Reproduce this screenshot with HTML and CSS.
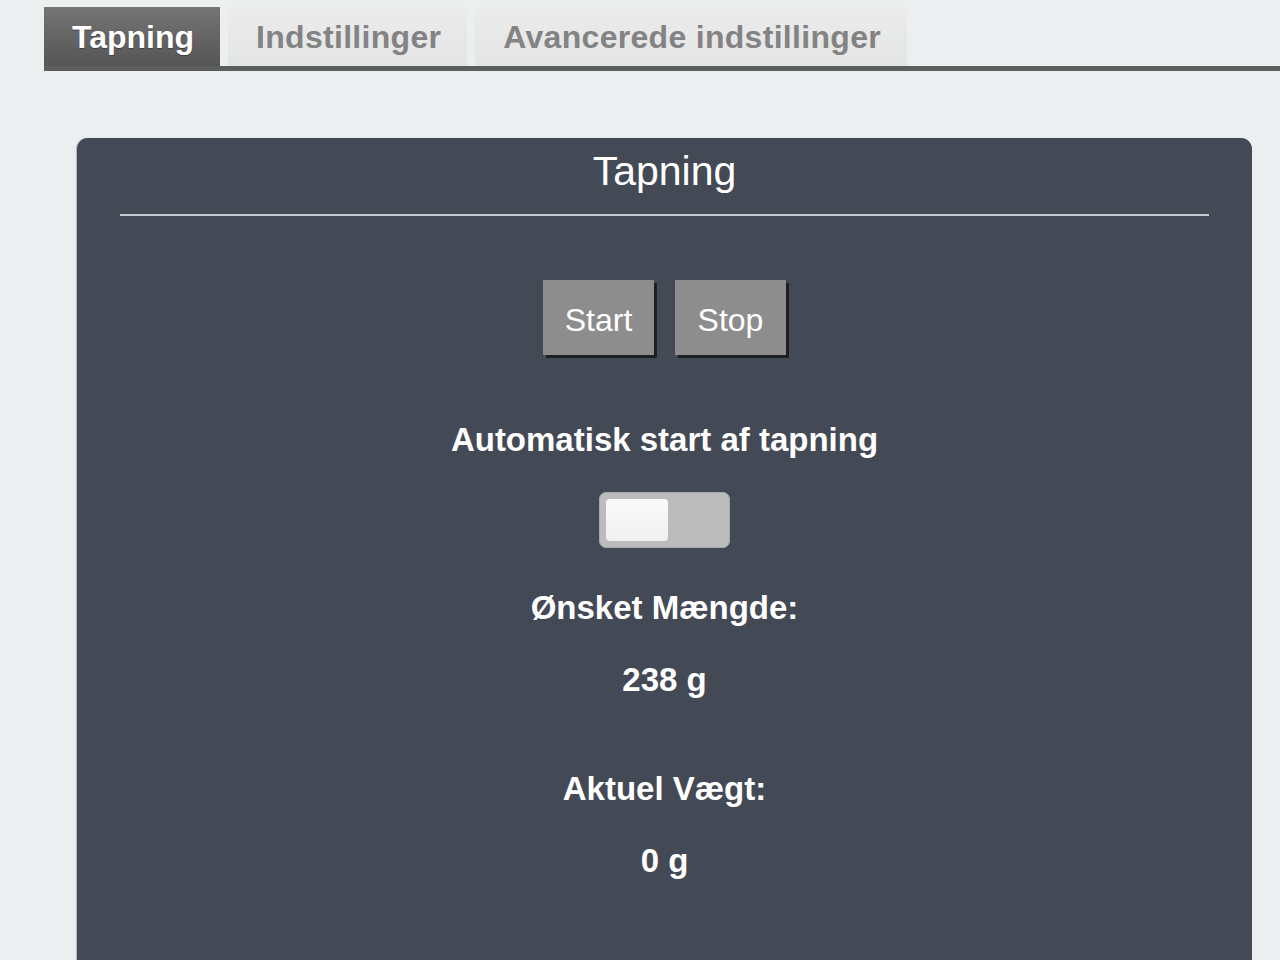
FILE: index.html
```html
<!DOCTYPE html>
<html lang="da">
<head>
<meta charset="utf-8">
<title>Tapning</title>
<link rel="stylesheet" href="styles.css">
</head>
<body>
<nav class="tabs">
  <div class="tab active">Tapning</div>
  <div class="tab">Indstillinger</div>
  <div class="tab">Avancerede indstillinger</div>
</nav>
<main class="panel">
  <h1 class="title">Tapning</h1>
  <div class="rule"></div>
  <div class="buttons">
    <button class="btn">Start</button>
    <button class="btn">Stop</button>
  </div>
  <div class="label auto">Automatisk start af tapning</div>
  <div class="toggle"><div class="knob"></div></div>
  <div class="label wish">Ønsket Mængde:</div>
  <div class="label wish-val">238 g</div>
  <div class="label weight">Aktuel Vægt:</div>
  <div class="label weight-val">0 g</div>
</main>
</body>
</html>
```
FILE: styles.css
```css
html, body {
  margin: 0;
  padding: 0;
  background: #eceff0;
  font-family: "Liberation Sans", Arial, sans-serif;
  overflow: hidden;
}

.tabs {
  display: flex;
  gap: 8px;
  margin-left: 44px;
  padding-top: 7px;
  border-bottom: 5px solid #5d5e5e;
}

.tab {
  box-sizing: border-box;
  height: 59px;
  padding: 4px 26px 0 28px;
  line-height: 53px;
  font-size: 32px;
  font-weight: bold;
  letter-spacing: 0.3px;
  color: #838383;
  background: linear-gradient(#ebebeb, #e4e5e5);
  white-space: nowrap;
}

.tab.active {
  color: #ffffff;
  letter-spacing: 0;
  background: linear-gradient(#757575, #555555);
  text-shadow: 0 1px 1px rgba(0,0,0,0.35);
}

.panel {
  margin: 67px 28px 0 77px;
  height: 900px;
  background: #444956;
  border-radius: 11px;
  box-shadow: -1px 0 1px rgba(0,0,0,0.25);
  color: #ffffff;
  text-align: center;
  display: flex;
  flex-direction: column;
  align-items: center;
}

.title {
  margin: 0;
  padding-top: 10px;
  font-size: 41px;
  font-weight: normal;
  line-height: 46px;
}

.rule {
  align-self: stretch;
  margin: 20px 43px 0;
  height: 2px;
  background: #c6c9d3;
}

.buttons {
  display: flex;
  gap: 21px;
  margin-top: 64px;
}

.btn {
  box-sizing: border-box;
  width: 111px;
  height: 75px;
  padding: 6px 0 0;
  border: none;
  background: #8d8d8d;
  color: #ffffff;
  font-family: "Liberation Sans", Arial, sans-serif;
  font-size: 32px;
  box-shadow: 3px 3px 0 #1f1f22;
}

.label {
  font-size: 33px;
  font-weight: bold;
  line-height: 38px;
}

.auto { margin-top: 66px; }

.toggle {
  box-sizing: border-box;
  margin-top: 33px;
  width: 131px;
  height: 56px;
  padding: 6px;
  border-radius: 7px;
  background: #bcbcbc;
  border: 1px solid #a9a9a9;
}

.knob {
  width: 62px;
  height: 100%;
  border-radius: 4px;
  background: linear-gradient(#fafafa, #f0f0f0);
}

.wish { margin-top: 41px; }
.wish-val { margin-top: 34px; }
.weight { margin-top: 71px; }
.weight-val { margin-top: 34px; }
```
